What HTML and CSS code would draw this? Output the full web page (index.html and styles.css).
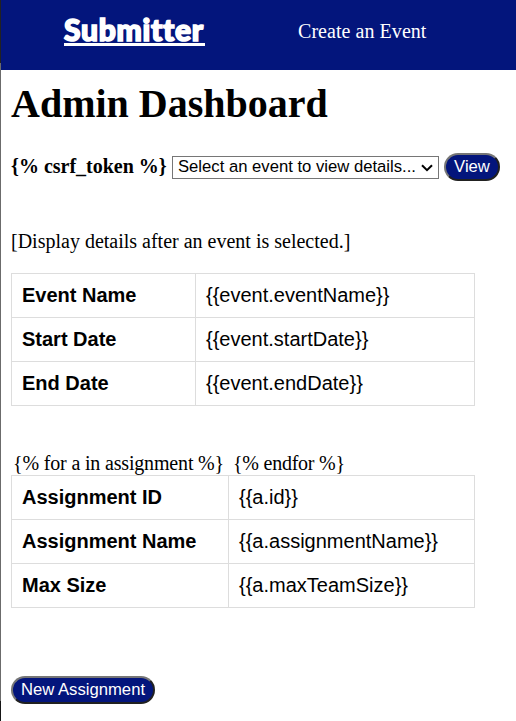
FILE: index.html
```
<!DOCTYPE html>
<html lang="en">
<head>
<meta charset="utf-8">
<title>Submitter</title>
<link rel="stylesheet" href="styles.css">
</head>
<body>
<header class="nav">
  <a class="brand">Submitter</a>
  <a class="nav-link">Create an Event</a>
</header>
<main>
  <h1>Admin Dashboard</h1>
  <form class="picker">
    <label class="token">{% csrf_token %}</label>
    <div class="select-wrap">
      <select class="event-select"><option>Select an event to view details...</option></select>
      <svg class="chevron" width="12" height="8" viewBox="0 0 12 8"><path d="M1 1.2 6 6.2 11 1.2" fill="none" stroke="#000" stroke-width="2"/></svg>
    </div>
    <button type="button" class="btn view">View</button>
  </form>
  <p class="hint">[Display details after an event is selected.]</p>
  <table class="event-table">
    <tr><th>Event Name</th><td>{{event.eventName}}</td></tr>
    <tr><th>Start Date</th><td>{{event.startDate}}</td></tr>
    <tr><th>End Date</th><td>{{event.endDate}}</td></tr>
  </table>
  <div class="loop"><span>{% for a in assignment %}</span><span>{% endfor %}</span></div>
  <table class="assignment-table">
    <tr><th>Assignment ID</th><td>{{a.id}}</td></tr>
    <tr><th>Assignment Name</th><td>{{a.assignmentName}}</td></tr>
    <tr><th>Max Size</th><td>{{a.maxTeamSize}}</td></tr>
  </table>
  <button type="button" class="btn new">New Assignment</button>
</main>
</body>
</html>
```
FILE: styles.css
```
* { box-sizing: border-box; }
html { background: #fff; }
body {
  margin: 0;
  height: 721px;
  overflow: hidden;
  padding-left: 1px;
  background: linear-gradient(#222 0 63px, #6b6b6b 63px 701px, #151515 701px) left / 1px 100% no-repeat;
  font: 20px/23px "Liberation Serif", serif;
  color: #000;
}
.nav {
  display: flex;
  height: 70px;
  padding-left: 63px;
  background: #03157c;
  color: #fff;
}
.brand {
  width: 141px;
  height: 46px;
  padding-top: 12px;
  border-bottom: 3px solid #fff;
  font: 900 30px/34px Lato, sans-serif;
  letter-spacing: 0.7px;
  white-space: nowrap;
  -webkit-text-stroke: 1.6px #fff;
  stroke-linejoin: round;
}
.nav-link { margin: 20px 0 0 93px; letter-spacing: 0.05px; }
main { padding-left: 10px; }
h1 {
  margin: 11px 0 0;
  font-size: 40px;
  line-height: 46px;
}
.picker {
  display: flex;
  align-items: center;
  height: 28px;
  margin-top: 26px;
}
.token { width: 161px; margin-top: -1px; font-weight: bold; white-space: nowrap; }
.select-wrap { position: relative; height: 23px; }
.event-select {
  display: block;
  appearance: none;
  width: 267px;
  height: 23px;
  padding: 0 0 1px 5px;
  border: 1px solid #767676;
  border-radius: 0;
  background: #fff;
  color: #000;
  font: 16.67px/20px "Liberation Sans", sans-serif;
}
.chevron { position: absolute; right: 6px; top: 8px; }
.btn {
  display: block;
  height: 28px;
  padding: 0;
  border: 2px solid;
  border-color: #767676 #212121 #212121 #767676;
  border-radius: 14px;
  background: #03157c;
  color: #fff;
  font: 16.67px/20px "Liberation Sans", sans-serif;
  white-space: nowrap;
}
.view { width: 56px; margin-left: 5px; }
.new { width: 144px; margin-top: 68px; }
.hint { margin: 49px 0 0; }
table {
  width: 464px;
  border-collapse: collapse;
  table-layout: fixed;
  font: 20px/23px "Liberation Sans", sans-serif;
}
th, td {
  height: 44px;
  padding: 0 10px;
  border: 1px solid #ddd;
  text-align: left;
}
.event-table { margin-top: 20px; }
.event-table th { width: 184px; }
.assignment-table th { width: 217px; }
.loop {
  display: flex;
  gap: 9px;
  margin-top: 46px;
  padding-left: 2px;
  letter-spacing: -0.17px;
}
.loop span + span { letter-spacing: -0.25px; }
```
